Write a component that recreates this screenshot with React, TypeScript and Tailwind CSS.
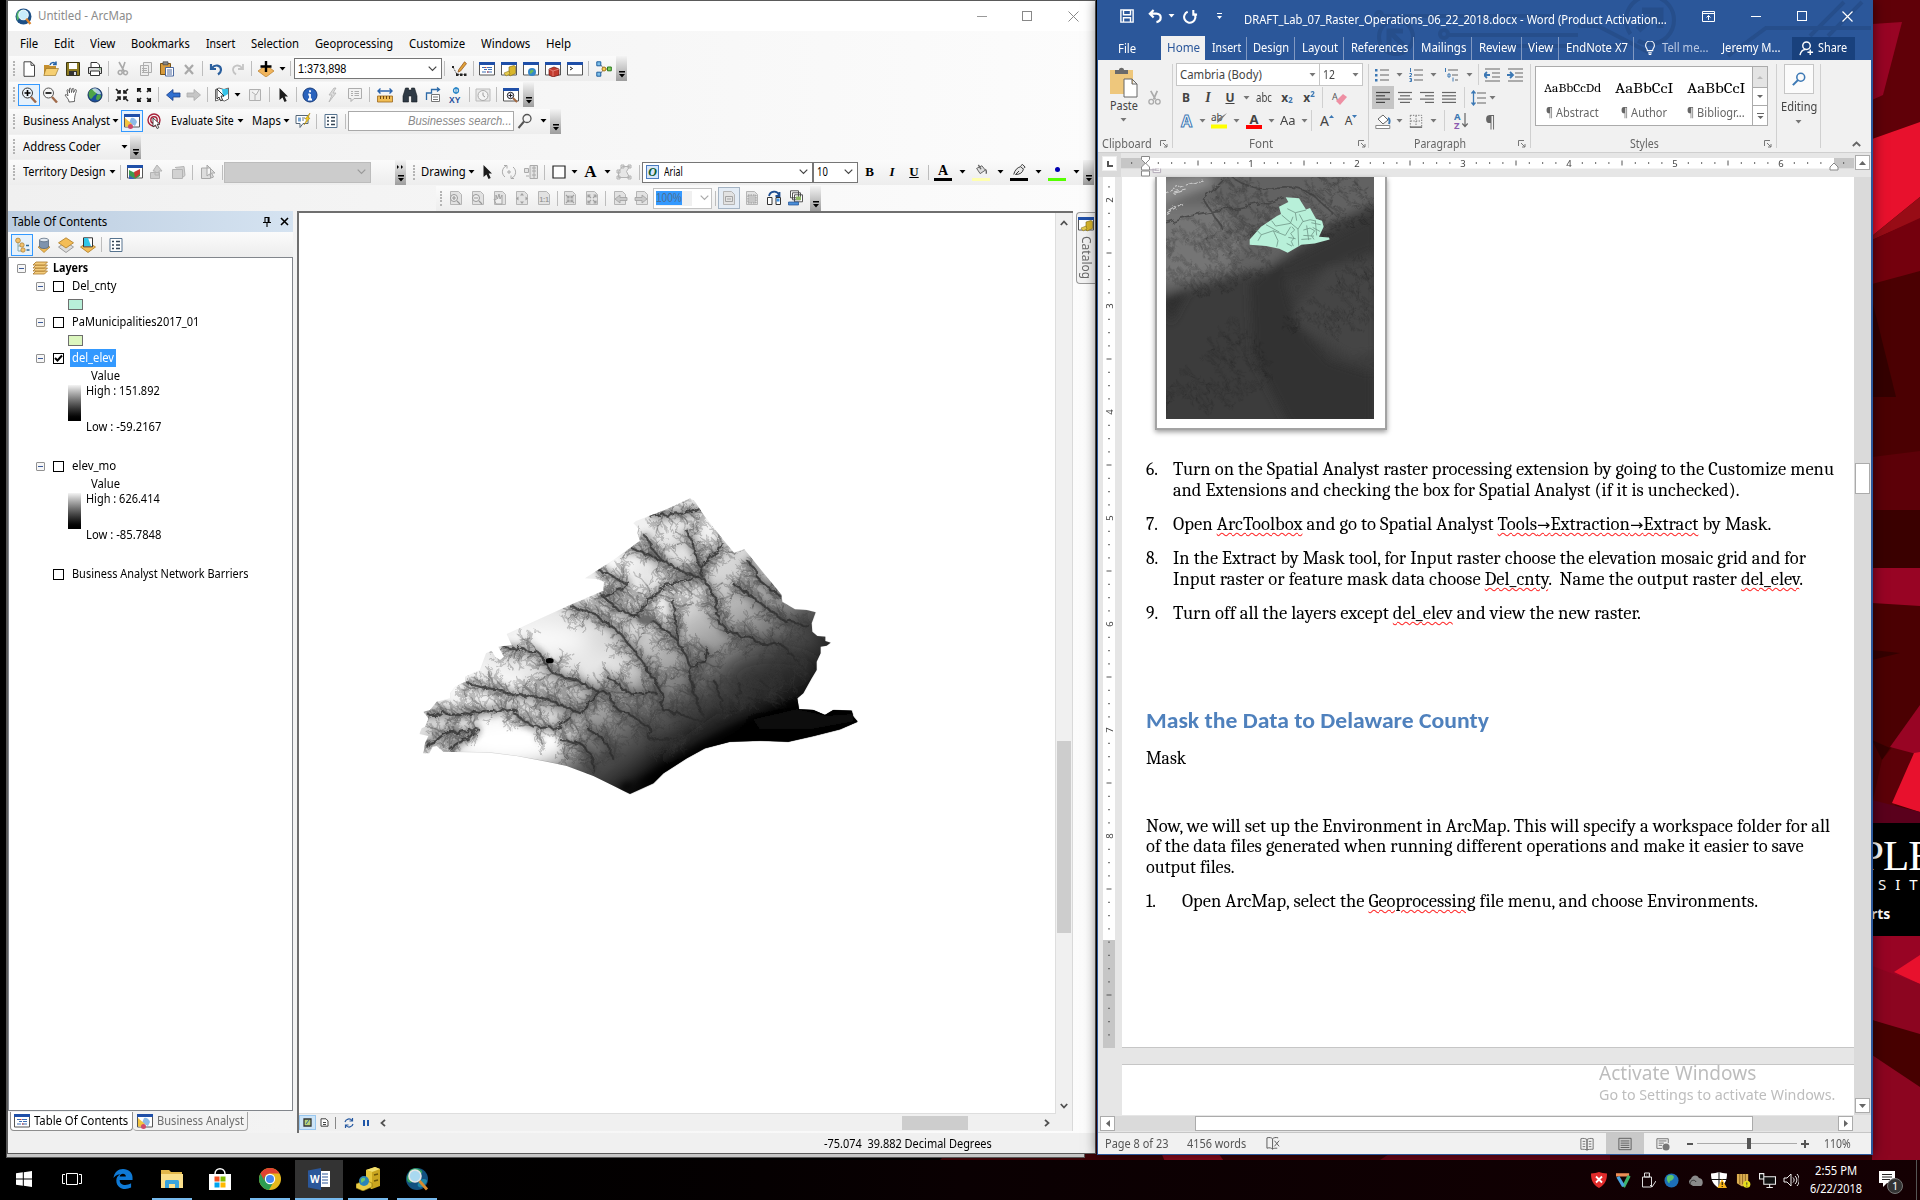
import React, { useLayoutEffect, useRef, useState } from "react";

type Kids = { children?: React.ReactNode };

/* Text squeezed or stretched to an exact width. */
function T({ w, c = "", children }: { w: number; c?: string } & Kids) {
  const ref = useRef<HTMLSpanElement>(null);
  const [s, setS] = useState(1);
  useLayoutEffect(() => {
    if (ref.current && ref.current.offsetWidth) setS(w / ref.current.offsetWidth);
  }, [w]);
  return (
    <span className={"inline-block shrink-0 whitespace-pre " + c} style={{ width: w }}>
      <span ref={ref} className="inline-block origin-left" style={{ transform: `scaleX(${s})` }}>
        {children}
      </span>
    </span>
  );
}

/* Toolbar cell */
function C({ c = "w-[22px]", children }: { c?: string } & Kids) {
  return <div className={"flex h-full shrink-0 items-center justify-center " + c}>{children}</div>;
}
const Sep = ({ c = "w-[5px]" }) => (
  <C c={c}>
    <div className="h-[15px] w-px bg-[#bdbdbd]" />
  </C>
);
const Arr = ({ c = "w-[9px]", f = "#000" }) => (
  <C c={c}>
    <svg width="7" height="4" viewBox="0 0 7 4">
      <path d="M0.5 0h6l-3 3.5z" fill={f} />
    </svg>
  </C>
);
const Handle = () => (
  <C c="w-[9px]">
    <div className="flex h-[15px] w-[2px] flex-col justify-between pl-0">
      {[0, 1, 2, 3, 4].map((i) => (
        <div key={i} className="h-[2px] w-[2px] bg-[#b4b4b4]" />
      ))}
    </div>
  </C>
);
const Over = ({ top = false }) => (
  <div className="flex h-[25px] w-[11px] shrink-0 flex-col items-center justify-between bg-linear-to-b from-[#f4f4f4] to-[#9d9d9d] pb-[3px] pt-[5px]">
    <svg width="7" height="5" viewBox="0 0 7 5">
      {top && <path d="M0 0l2 2-2 2zM4 0l2 2-2 2z" fill="#000" />}
    </svg>
    <svg width="7" height="7" viewBox="0 0 7 7">
      <path d="M1 0h6v1.5H1zM1 3h6L4 6.5z" fill="#000" />
    </svg>
  </div>
);
const Chev = ({ f = "#444" }) => (
  <svg width="9" height="6" viewBox="0 0 9 6">
    <path d="M.7.7l3.8 3.8L8.3.7" fill="none" stroke={f} strokeWidth="1.2" />
  </svg>
);

function I({ s = 16, children, vb = "0 0 16 16" }: { s?: number; vb?: string } & Kids) {
  return (
    <svg width={s} height={s} viewBox={vb} className="shrink-0" fill="none">
      {children}
    </svg>
  );
}

const pageShape = <path d="M2.5 1.5h8l3 3v10h-11z" fill="#e2e2e2" stroke="#b5b5b5" />;
const win = (
  <>
    <path d="M.5 2.500h15v11.500H.5z" fill="#fff" stroke="#555" />
    <path d="M0 1h16v3H0z" fill="#1f4fa8" />
  </>
);
const globe = (
  <>
    <circle cx="8" cy="8" r="7" fill="#1b4f9c" stroke="#16345e" />
    <path d="M2 5c2-4 6-3 7-2s1 4-1 5-3 4-4 4-3-4-2-7zM10 8c3-1 4 0 4 1s-2 5-4 4 0-4 0-5z" fill="#4fa548" />
    <path d="M5 2c4-2 8 1 9 5-3 1-6-1-9-5z" fill="#e2f3ff" opacity=".75" />
  </>
);

const icons: Record<string, React.ReactNode> = {
  new: <path d="M3 .8h7l3.500 3.500v11H3zM10 .8v3.500h3.500" fill="#fff" stroke="#444" />,
  open: (
    <>
      <path d="M1 4h5l1 1h6v9H1z" fill="#c58f2e" />
      <path d="M3 7.500h12.500l-3 7H.8z" fill="#f6cf72" stroke="#8f6a1f" strokeWidth=".6" />
      <path d="M7 4c1-3 4-3 6-1M13 .5v3h-3" stroke="#2563a8" strokeWidth="1.500" />
    </>
  ),
  save: (
    <>
      <path d="M1.500 1.500h13v13h-13z" fill="#8d7b22" stroke="#3c3610" />
      <path d="M4 2h8v6H4z" fill="#fff" />
      <path d="M4 10h8v4.500H4z" fill="#333" />
      <path d="M9 11h2v3H9z" fill="#ddd" />
    </>
  ),
  print: (
    <>
      <path d="M4 6V1.500h6L12.500 4v2" fill="#fff" stroke="#333" />
      <path d="M1.500 6.500h13v6h-13z" fill="#ddd" stroke="#333" />
      <path d="M3.500 10h9v4.500h-9z" fill="#fff" stroke="#333" />
      <path d="M12 8h1.500" stroke="#3a3" />
    </>
  ),
  cut: <path d="M4 1l5 9M10 1L7 10M6.500 10a2 2 0 1 0-1 3.500 2 2 0 0 0 1-3.500zM9.500 10a2 2 0 1 0 3 2 2 2 0 0 0-3-2z" stroke="#aaa" strokeWidth="1.600" />,
  copy: <path d="M5.500 1.500h8v10h-8zM2.500 4.500h8v10h-8zM4 7.500h5M4 9.500h5M4 11.500h5" fill="#eee" stroke="#adadad" />,
  paste: (
    <>
      <path d="M1.500 2.500h10v11h-10z" fill="#d89b3c" stroke="#7c5515" />
      <path d="M4 .8h5v3H4z" fill="#888" stroke="#444" strokeWidth=".7" />
      <path d="M6.500 6.500h8v8.500h-8zM8 9h5M8 11h5M8 13h5" fill="#fff" stroke="#3a5a96" strokeWidth=".9" />
    </>
  ),
  del: <path d="M4 4l8 9M12 4l-8 9" stroke="#a9a9a9" strokeWidth="2.200" />,
  undo: <path d="M3 3v5h5M4 7c3-4 9-3 9 2 0 2-1 3-3 4.500" stroke="#2a5f9e" strokeWidth="2.200" />,
  redo: <path d="M13 3v5H8M12 7c-3-4-9-3-9 2 0 2 1 3 3 4.500" stroke="#c4c4c4" strokeWidth="1.800" />,
  add: (
    <>
      <path d="M8 4l8 6-8 6-8-6z" fill="#f0b45c" stroke="#b87b28" strokeWidth=".7" />
      <path d="M8 0v11M2.500 5.500h11" stroke="#000" strokeWidth="2.400" />
    </>
  ),
  edit: (
    <>
      <path d="M13.500.8l2 1.800-6 7.500-2.500 1 .8-2.500z" fill="#e0a238" stroke="#8d4b12" strokeWidth=".7" />
      <path d="M2 6l4 7.500h8" stroke="#222" strokeWidth=".8" strokeDasharray="2 1" />
      <path d="M1 5h2v2H1zM5 12.500h2.500V15H5zM9 12.500h2.500V15H9zM13 12.500h2.500V15H13z" fill="#222" />
    </>
  ),
  toc: (
    <>
      {win}
      <path d="M3 6.500h3M8 6.500h5M5 8.500h3M9 8.500h4M3 11h4M8 11h5" stroke="#3c6eb4" strokeWidth="1.200" />
      <path d="M6 6h1.500v1H6zM8 10.500h1.500v1H8z" fill="#c33" />
    </>
  ),
  catalog: (
    <>
      {win}
      <path d="M8 6l5-1.500 1.500 1v7L9 15l-1-1z" fill="#d9b62b" stroke="#7e6811" strokeWidth=".6" />
      <path d="M3 12l5-2 1 3-4 2z" fill="#e6cb4e" stroke="#7e6811" strokeWidth=".5" />
    </>
  ),
  search: (
    <>
      {win}
      <circle cx="9" cy="11" r="4" fill="#3587c9" />
      <path d="M7 10c2-3 5 0 3 1s-2 3-3 1z" fill="#69b95a" />
    </>
  ),
  toolbox: (
    <>
      {win}
      <path d="M4 8l5-2 5 2v6l-6 2-4-2z" fill="#c23b2e" stroke="#6e1812" strokeWidth=".7" />
      <path d="M4 8l4 2 6-2M8 10v5" stroke="#f09b90" strokeWidth=".7" />
    </>
  ),
  python: (
    <>
      {win}
      <path d="M3 6l2.500 1.500L3 9" stroke="#222" />
    </>
  ),
  model: (
    <>
      <path d="M4 3l4 5-4 5M8 8h5" stroke="#777" />
      <path d="M.8.8h4v4h-4zM.8 11.200h4v4h-4z" fill="#7fc0ea" stroke="#1f5f9e" />
      <circle cx="8" cy="8" r="2" fill="#f5cf52" stroke="#a5721a" />
      <path d="M11.500 6h3.800v3.800h-3.800z" fill="#84cf5c" stroke="#2c7a1d" />
    </>
  ),
  zin: (
    <>
      <circle cx="6.500" cy="6" r="5" fill="#eaf3fb" stroke="#333" />
      <path d="M6.500 3v6M3.500 6h6" stroke="#000" strokeWidth="1.600" />
      <path d="M10 10l5 5.500" stroke="#a06a4a" strokeWidth="2.400" />
    </>
  ),
  zout: (
    <>
      <circle cx="6.500" cy="6" r="5" fill="#f6f6f6" stroke="#555" />
      <path d="M3.500 6h6" stroke="#000" strokeWidth="1.600" />
      <path d="M10 10l5 5.500" stroke="#a06a4a" strokeWidth="2.400" />
    </>
  ),
  pan: <path d="M5 15c0-3-3-5-4-7 1-1 2 0 3 1L3 3c1-1 2 0 2.500 3V1.500c1-1 2 0 2 4l1-4c1-.5 2 0 1 4l2-3c1 0 1.500 1 0 4-1 4-1 5-1 8z" fill="#fff" stroke="#555" strokeWidth=".9" />,
  globe,
  fin: <path d="M2 2l4 4M6 3V6H3M14 2l-4 4M10 3V6h3M2 14l4-4M6 13V10H3M14 14l-4-4M10 13V10h3" stroke="#1c1c1c" strokeWidth="1.700" />,
  fout: <path d="M5 5L1.800 1.800M1.800 5V1.800H5M11 5l3.200-3.200M14.200 5V1.800H11M5 11l-3.200 3.200M1.800 11v3.200H5M11 11l3.200 3.200M14.200 11v3.200H11" stroke="#1c1c1c" strokeWidth="1.700" />,
  back: <path d="M8 2.500v3.500h7v4H8v3.500L1.500 8z" fill="#2f6fd0" stroke="#1d3f86" strokeWidth=".8" />,
  fwd: <path d="M8 2.500v3.500H1v4h7v3.500L14.500 8z" fill="#c6c6c6" stroke="#aaa" strokeWidth=".8" />,
  sel: (
    <>
      <path d="M1.500 2.500L5 1l5 1.500L14.500 1v11l-4 2-5-1.500-4 1.500z" fill="#fff" stroke="#666" />
      <path d="M8 2h6v5L9 10z" fill="#35c3e8" />
      <path d="M3 2l7 7H7l1.500 4-2 .7L5 10l-2 2z" fill="#fff" stroke="#222" strokeWidth=".9" />
    </>
  ),
  clr: <path d="M2.500 2.500h11v11h-11zM5 5l4 3 3-5M8 8v5" fill="#eee" stroke="#b0b0b0" />,
  ptr: <path d="M4.500 1v12l3-2.600 2 4.600 2.200-1-2-4.500H13z" fill="#1c1c1c" />,
  info: (
    <>
      <circle cx="8" cy="8" r="7" fill="#2a63bd" stroke="#173b7a" />
      <path d="M8 3.200v2M8 7v5.500M6.300 7.500H8M6 12.500h4" stroke="#fff" strokeWidth="1.800" />
    </>
  ),
  bolt: <path d="M10 1L5 8h3l-3 7 7-9H9l3-5z" fill="#ddd" stroke="#b2b2b2" strokeWidth=".8" />,
  html: <path d="M1.500 1.500h13v10H7l-3 3v-3H1.500zM4 4.500h2M7.500 4.500H12M4 6.500h2M7.500 6.500H12M4 8.500h2M7.500 8.500H12" fill="#f2f2f2" stroke="#adadad" />,
  meas: (
    <>
      <path d="M1 4h14M3.500 1.500L1 4l2.500 2.500M12.500 1.500L15 4l-2.500 2.500" stroke="#2b64ad" strokeWidth="1.400" />
      <path d="M.5 9h15v6H.5z" fill="#f0bd55" stroke="#9a661a" strokeWidth=".8" />
      <path d="M3.500 9v3M6.500 9v3M9.500 9v3M12.500 9v3" stroke="#6d4611" />
    </>
  ),
  bino: <path d="M3.500 1h3v2h3V1h3l2.500 8v6H9.500V9h-3v6H1V9z" fill="#2f3a45" stroke="#161c22" strokeWidth=".6" />,
  route: (
    <>
      <path d="M1.500 13V6h5V2.500h8M12 .5l2.500 2L12 4.500" stroke="#2c6aa8" strokeWidth="1.300" />
      <path d="M6.500 7.500h8v7h-8zM8 10h5M8 12.500h5" fill="#fff" stroke="#777" />
    </>
  ),
  xy: (
    <>
      <circle cx="8" cy="3.500" r="2.500" stroke="#2784c7" strokeWidth="1.300" />
      <path d="M8 0v7" stroke="#2784c7" />
      <text x="1" y="15.500" fontSize="8.500" fontWeight="700" fontFamily="Liberation Sans, sans-serif" fill="#1f4e9c">XY</text>
    </>
  ),
  time: (
    <>
      <path d="M1 2h14v12H1z" fill="#e9e9e9" stroke="#bbb" />
      <circle cx="8" cy="8.500" r="5" fill="#f4f4f4" stroke="#aaa" />
      <path d="M8 5.500v3l2 1.500" stroke="#999" />
    </>
  ),
  view: (
    <>
      {win}
      <circle cx="7.500" cy="8.500" r="3.200" fill="#eef" stroke="#222" />
      <path d="M7.500 6.500v4M5.500 8.500h4" stroke="#222" />
      <path d="M10 11l4 4" stroke="#a2673f" strokeWidth="2" />
    </>
  ),
  ba: (
    <>
      {win}
      <path d="M7 5a5 5 0 0 1 6 4l-2 4-6-3z" fill="#8dbbe6" />
      <path d="M1 5l7 6-5 3-2-1z" fill="#f3c440" />
      <circle cx="6.500" cy="13.500" r="2.500" fill="#cf4a6a" />
    </>
  ),
  target: (
    <>
      <circle cx="7" cy="7" r="6" stroke="#a8223a" strokeWidth="1.400" />
      <circle cx="7" cy="7" r="3.200" stroke="#a8223a" strokeWidth="1.400" />
      <path d="M6 5v9l2.500-2 1.500 3.500 1.800-.8-1.600-3.500H13z" fill="#fff" stroke="#222" strokeWidth=".8" />
    </>
  ),
  balloon: (
    <>
      <path d="M1 2.500h12v8H8l-3 4v-4H1z" fill="#fff" stroke="#567" />
      <path d="M3 4.500h3v4H3z" fill="#78a6d6" />
      <path d="M7 5h3M7 7h2" stroke="#678" />
      <path d="M15 0l-5 6h2l-3 6 6-7h-2z" fill="#f7cf1e" stroke="#a77f08" strokeWidth=".5" />
    </>
  ),
  list: (
    <>
      <path d="M2 1.500h12v13H2z" fill="#fff" stroke="#56738f" />
      <path d="M4 4.500h2M8 4.500h4M4 8h2M8 8h4M4 11.500h2M8 11.500h4" stroke="#345" strokeWidth="1.300" />
    </>
  ),
  mag: (
    <>
      <circle cx="10" cy="5.500" r="4" stroke="#555" strokeWidth="1.300" />
      <path d="M7 8.500L1.500 15" stroke="#555" strokeWidth="2" />
    </>
  ),
  terr: (
    <>
      {win}
      <path d="M2 6l6 3 5-3v6l-5 3-6-3z" fill="#3c9a4d" />
      <path d="M7 8l6-3v5l-5 4z" fill="#c63a33" />
      <path d="M2 11l6 4H2z" fill="#3c62b5" />
    </>
  ),
  up: <path d="M1.500 8.500h9v6h-9zM8 1l5 6h-3v4H6V7H4z" fill="#cfcfcf" stroke="#b4b4b4" />,
  fold: <path d="M1.500 5.500h10v9h-10zM4 3.500l9-1 1 9-2.500 2" fill="#d2d2d2" stroke="#b4b4b4" />,
  selg: <path d="M1.500 4h9v10.500h-9zM7 1v11l2.500-2 2 4 2-1-2-4H15z" fill="#ddd" stroke="#a8a8a8" />,
  rot: <path d="M4 13a6.500 6.500 0 0 1 1-11M12 3a6.500 6.500 0 0 1-1 11M3 1.500h3v3M13 14.500h-3v-3M7 7h2v2H7z" stroke="#a9a9a9" />,
  zsel: <path d="M1.500 4.500h4v4h-4zM7 1.500h7.500v13H7zM3 12h3M9 4h4M9 7h4M9 11h4M11 2v12" fill="#e3e3e3" stroke="#aaa" />,
  rect: <path d="M2 2h12v12H2z" fill="#fdfdfd" stroke="#222" strokeWidth="1.200" />,
  verts: <path d="M2.500 13.500v-6l4-5h7l-3 5 3 6zM1 12h3v3H1zM12 12h3v3h-3zM5 1h3v3H5zM12 1h3v3h-3zM1 6h3v3H1z" fill="#e6e6e6" stroke="#b3b3b3" />,
  bucket: (
    <>
      <path d="M3 5l6-3 4 5-6 4z" fill="#ddd" stroke="#555" />
      <path d="M5 1l3 5M13 6c2 2 1 4 1 5" stroke="#666" strokeWidth="1.600" />
    </>
  ),
  pen: <path d="M2 12c1-5 4-8 8-9l3 3c-1 4-4 6-9 6l4-4M10 2l2-1.500 3 3L13.500 5" fill="#e7e7e7" stroke="#222" />,
  pz: (
    <>
      {pageShape}
      <circle cx="6" cy="8" r="3.500" fill="#eee" stroke="#999" />
      <path d="M4 8h4M6 6v4M9 11l3 3" stroke="#999" strokeWidth="1.200" />
    </>
  ),
  pzo: (
    <>
      {pageShape}
      <circle cx="6" cy="8" r="3.500" fill="#eee" stroke="#999" />
      <path d="M4 8h4M9 11l3 3" stroke="#999" strokeWidth="1.200" />
    </>
  ),
  phand: (
    <>
      {pageShape}
      <path d="M4 14l-2-5 2 1V5l1.500 4L7 4l1 5 2-4v9z" fill="#eee" stroke="#a3a3a3" />
    </>
  ),
  pfull: (
    <>
      {pageShape}
      <path d="M8 3l2 2.500H6zM8 14l2-2.500H6zM2 8.500L4.500 6.500v4zM14 8.500l-2.500-2v4z" fill="#a0a0a0" />
    </>
  ),
  p11: (
    <>
      {pageShape}
      <text x="3.500" y="12" fontSize="6.500" fontWeight="700" fontFamily="Liberation Sans, sans-serif" fill="#999">1:1</text>
    </>
  ),
  pin4: (
    <>
      {pageShape}
      <path d="M4 5l3 3M7 5.500V8H4.500M12 5L9 8M9 5.500V8h2.500M4 13l3-3M7 12.500V10H4.500M12 13l-3-3M9 12.500V10h2.500" stroke="#a0a0a0" strokeWidth="1.200" />
    </>
  ),
  pout4: (
    <>
      {pageShape}
      <path d="M7 8L4 5M4 7.500V5h2.500M9 8l3-3M12 7.500V5H9.500M7 10l-3 3M4 10.500V13h2.500M9 10l3 3M12 10.500V13H9.500" stroke="#a0a0a0" strokeWidth="1.200" />
    </>
  ),
  pback: (
    <>
      {pageShape}
      <path d="M8 5v2.500h7v3H8V13L3 9z" fill="#c9c9c9" stroke="#a0a0a0" strokeWidth=".8" />
    </>
  ),
  pfwd: (
    <>
      {pageShape}
      <path d="M8 5v2.500H1v3h7V13l5-4z" fill="#c9c9c9" stroke="#a0a0a0" strokeWidth=".8" />
    </>
  ),
  pg1: (
    <>
      {pageShape}
      <path d="M4.500 6.500h7v5h-7zM6 9h4" stroke="#a3a3a3" />
    </>
  ),
  pg2: (
    <>
      {pageShape}
      <path d="M4 5h8v8H4z" fill="#c6c6c6" stroke="#999" strokeDasharray="1.500 1" />
    </>
  ),
  dd: (
    <>
      <path d="M1.500 7.500h4.500v7H1.500zM10 7.500h4.500v7H10z" fill="#fff" stroke="#333" />
      <path d="M10.500 8.500h3v3h-3z" fill="#3a8ee0" />
      <path d="M3 6c1-5 8-6 10-1M13.500 2v4H9.500" stroke="#1f4f92" strokeWidth="1.800" />
    </>
  ),
  book: (
    <>
      <path d="M2.500.8h8v7h-8zM4.500 2.800h8v7h-8zM6.500 4.800h8v7h-8z" fill="#fff" stroke="#444" strokeWidth=".9" />
      <path d="M8 6.500h5v3.500H8z" fill="#8fb963" />
      <path d="M.5 12h10v3H.5z" fill="#4c8fd8" stroke="#1f4f92" strokeWidth=".7" />
    </>
  ),
  t1: (
    <>
      <path d="M4 5v9h5M4 9h5" stroke="#8aa" strokeWidth="1" />
      <circle cx="4" cy="3.500" r="2.400" fill="#f1c16e" stroke="#a87a2c" strokeWidth=".7" />
      <circle cx="8" cy="8" r="2.200" fill="#f1c16e" stroke="#a87a2c" strokeWidth=".7" />
      <circle cx="9" cy="13" r="2.200" fill="#f1c16e" stroke="#a87a2c" strokeWidth=".7" />
      <path d="M12 8.500h3M12.500 13h3" stroke="#2e6a9a" strokeWidth="1.500" />
    </>
  ),
  t2: (
    <>
      <path d="M2 10l6 5.500 6-5.500-6-2z" fill="#f0b954" stroke="#b17e24" strokeWidth=".7" />
      <path d="M3.500 3v7c1 2 8 2 9 0V3z" fill="#7e93ad" stroke="#4e6076" strokeWidth=".7" />
      <ellipse cx="8" cy="3" rx="4.500" ry="1.800" fill="#dfe7f0" stroke="#4e6076" strokeWidth=".7" />
    </>
  ),
  t3: (
    <>
      <path d="M8 5l7.500 5L8 15.500.5 10z" fill="#ddd" stroke="#888" strokeWidth=".8" />
      <path d="M8 .8l7.500 5L8 11 .5 5.800z" fill="#f3bd58" stroke="#ad7a21" strokeWidth=".8" />
    </>
  ),
  t4: (
    <>
      <path d="M8 5l7.500 5L8 15.500.5 10z" fill="#f3bd58" stroke="#ad7a21" strokeWidth=".8" />
      <path d="M3.500.8h9v9h-9z" fill="#fff" stroke="#333" />
      <path d="M4 1h4l3 8H4z" fill="#2fc6ea" />
    </>
  ),
  layers: (
    <>
      {[11, 8, 5, 2].map((y) => (
        <path key={y} d={`M4 ${y}h11.500l-3 3H1z`} fill="#f5cd7d" stroke="#a8762a" strokeWidth=".8" />
      ))}
    </>
  ),
};
const G = ({ n, s = 16 }: { n: string; s?: number }) => <I s={s}>{icons[n]}</I>;
const K = ({ n, c }: { n: string; c?: string }) => (
  <C c={c}>
    <G n={n} />
  </C>
);

/* ---------- terrain raster ---------- */
type P = [number, number];
const streams: P[][] = [
  [[690, 200], [790, 245], [850, 275], [910, 295], [945, 350], [955, 420], [980, 455], [1060, 475], [1085, 492], [1140, 492], [1180, 530], [1225, 580]],
  [[970, 190], [930, 235], [900, 265]],
  [[900, 88], [830, 100], [750, 110]],
  [[860, 150], [880, 200], [905, 290]],
  [[730, 165], [760, 210], [800, 250]],
  [[600, 340], [650, 385], [720, 415], [770, 430], [830, 480], [860, 530], [880, 620], [890, 670], [910, 715]],
  [[820, 360], [825, 420], [835, 480]],
  [[510, 380], [580, 400], [660, 460], [700, 510], [750, 580], [780, 630], [790, 690], [850, 705], [910, 725]],
  [[310, 500], [410, 515], [460, 580], [520, 600], [600, 635], [630, 640], [640, 680], [700, 710], [750, 745], [745, 775], [800, 778], [860, 770]],
  [[200, 610], [330, 640], [430, 655], [540, 700], [580, 660], [600, 635]],
  [[80, 700], [180, 705], [270, 690], [350, 690]],
  [[340, 700], [400, 740], [470, 745], [510, 710]],
  [[480, 780], [540, 790], [575, 830], [580, 880]],
  [[560, 740], [620, 790], [640, 840]],
  [[80, 800], [140, 760], [240, 750]],
  [[150, 810], [190, 780], [230, 760]],
  [[690, 310], [640, 340], [610, 350]],
  [[590, 270], [640, 290], [680, 310]],
  [[1000, 310], [1080, 370], [1150, 420], [1230, 440]],
  [[1040, 240], [1090, 310], [1145, 355]],
  [[940, 600], [960, 650], [970, 715]],
  [[1080, 600], [1110, 630], [1090, 660]],
  [[1020, 610], [1015, 690]],
  [[920, 500], [915, 545], [870, 560]],
  [[620, 590], [690, 640], [770, 640]],
  [[880, 290], [790, 320], [710, 400]],
];
function buildTerrain() {
  let seed = 77;
  const rnd = () => ((seed = (seed * 1103515245 + 12345) % 2147483648) / 2147483648);
  let main = "";
  let mid = "";
  let fine = "";
  const branch = (x: number, y: number, a: number, len: number, depth: number) => {
    let d = `M${x.toFixed(0)} ${y.toFixed(0)}`;
    const n = Math.max(2, Math.round(len / 7));
    for (let i = 0; i < n; i++) {
      a += (rnd() - 0.5) * 0.8;
      x += Math.cos(a) * 7;
      y += Math.sin(a) * 7;
      d += `L${x.toFixed(0)} ${y.toFixed(0)}`;
      if (depth > 0 && rnd() < 0.6) branch(x, y, a + (rnd() < 0.5 ? -1 : 1) * (0.5 + rnd() * 0.5), len * (0.3 + rnd() * 0.3), depth - 1);
    }
    if (depth > 1) mid += d;
    else fine += d;
  };
  streams.forEach((s) => {
    main += `M${s[0].join(" ")}`;
    for (let i = 1; i < s.length; i++) {
      const [x0, y0] = s[i - 1];
      const [x1, y1] = s[i];
      const L = Math.hypot(x1 - x0, y1 - y0);
      const a = Math.atan2(y1 - y0, x1 - x0);
      const n = Math.max(1, Math.round(L / 10));
      for (let k = 1; k <= n; k++) {
        const t = k / n;
        const j = k === n ? 0 : (rnd() - 0.5) * 9;
        const x = x0 + (x1 - x0) * t - Math.sin(a) * j;
        const y = y0 + (y1 - y0) * t + Math.cos(a) * j;
        main += `L${x.toFixed(0)} ${y.toFixed(0)}`;
        const side = rnd() < 0.5 ? -1 : 1;
        branch(x, y, a + Math.PI - side * (0.7 + rnd() * 0.5), 14 + rnd() * 50, 2);
      }
    }
  });
  return { main, mid, fine };
}
const terrain = buildTerrain();
const outline =
  "M870 55L883 62 900 88 915 110 972 182 1002 218 1033 208 1145 345 1147 365 1185 388 1220 390 1247 397 1235 430 1237 455 1252 468 1276 470 1276 483 1292 488 1280 497 1262 500 1262 520 1250 545 1250 570 1235 595 1210 640 1192 655 1197 688 1240 690 1275 705 1300 690 1355 692 1360 710 1373 725 1320 748 1240 768 1165 785 1080 782 990 785 915 805 860 835 790 880 760 910 690 942 580 888 500 858 440 845 350 828 270 818 130 815 110 798 98 800 88 820 70 820 75 790 85 768 58 762 65 745 75 740 85 715 70 695 90 690 110 665 150 655 150 640 165 620 195 605 195 590 240 570 258 520 275 512 285 530 300 540 312 530 295 500 335 495 320 462 400 425 510 375 610 332 612 305 590 297 555 295 640 240 720 182 712 160 715 145 700 130 708 123 800 88z";
const Terrain = () => (
  <svg width="480" height="330" viewBox="0 0 1440 990">
    <defs>
      <clipPath id="cty">
        <path d={outline} />
      </clipPath>
      <linearGradient id="base" gradientUnits="userSpaceOnUse" x1="470" y1="300" x2="840" y2="880">
        <stop offset="0" stopColor="#f0f0f0" />
        <stop offset=".4" stopColor="#d2d2d2" />
        <stop offset=".6" stopColor="#9c9c9c" />
        <stop offset=".76" stopColor="#565656" />
        <stop offset=".9" stopColor="#2a2a2a" />
        <stop offset="1" stopColor="#050505" />
      </linearGradient>
      <filter id="b2t" x="-20%" y="-20%" width="140%" height="140%"><feGaussianBlur stdDeviation="2" /></filter>
      <filter id="b3" x="-20%" y="-20%" width="140%" height="140%"><feGaussianBlur stdDeviation="3" /></filter>
      <filter id="b9" x="-20%" y="-20%" width="140%" height="140%"><feGaussianBlur stdDeviation="9" /></filter>
      <filter id="b40" x="-60%" y="-60%" width="220%" height="220%"><feGaussianBlur stdDeviation="30" /></filter>
      <filter id="rough" x="-5%" y="-5%" width="110%" height="110%">
        <feTurbulence type="fractalNoise" baseFrequency=".05" numOctaves="3" seed="4" />
        <feDisplacementMap in="SourceGraphic" scale="14" />
      </filter>
    </defs>
    <g clipPath="url(#cty)">
      <rect width="1440" height="990" fill="url(#base)" />
      <g filter="url(#b40)">
        <ellipse cx="340" cy="780" rx="190" ry="80" fill="#fff" />
        <ellipse cx="250" cy="620" rx="160" ry="70" fill="#fff" opacity=".8" />
        <ellipse cx="790" cy="350" rx="80" ry="45" fill="#fff" />
        <ellipse cx="440" cy="480" rx="130" ry="50" fill="#fff" opacity=".8" />
        <ellipse cx="640" cy="250" rx="80" ry="40" fill="#fff" opacity=".8" />
        <ellipse cx="610" cy="560" rx="110" ry="50" fill="#fff" opacity=".5" />
        <ellipse cx="950" cy="140" rx="60" ry="50" fill="#fff" opacity=".7" />
        <path d="M1150 350l210 90-80 250-330 10-230 160 500-20 250-150z" fill="#111" opacity=".5" />
        <ellipse cx="1120" cy="590" rx="150" ry="70" fill="#2a2a2a" opacity=".5" />
        <path d="M640 960l130-90 140-60 130-70 150-60 200-10v300z" fill="#000" />
      </g>
      <g stroke="#383838" strokeLinejoin="round" fill="none">
        <path d={terrain.mid} strokeWidth="16" opacity=".17" filter="url(#b9)" />
        <path d={terrain.main} strokeWidth="24" opacity=".4" filter="url(#b9)" />
        <g filter="url(#rough)">
          <path d={terrain.fine} strokeWidth="3.500" opacity=".27" filter="url(#b2t)" />
          <path d={terrain.mid} strokeWidth="4.500" opacity=".34" filter="url(#b2t)" />
          <path d={terrain.main} strokeWidth="6.500" opacity=".72" filter="url(#b2t)" stroke="#2c2c2c" />
        </g>
      </g>
      <ellipse cx="735" cy="420" rx="24" ry="11" fill="#6a6a6a" filter="url(#b3)" />
      <path d="M665 940L780 862 900 790 1010 732 1130 682 1195 655 1380 690v220H665z" fill="#000" opacity=".85" filter="url(#b9)" />
      <path d="M1060 718l130-30 90 20 80-6 0 22-130 24-150 0z" fill="#0e0e0e" filter="url(#b3)" />
      <ellipse cx="449" cy="542" rx="12" ry="8" fill="#000" />
    </g>
  </svg>
);

const Inset = () => (
  <svg width="208" height="242" viewBox="228 81 624 725" preserveAspectRatio="none" className="block">
    <defs>
      <filter id="b12" x="-30%" y="-30%" width="160%" height="160%"><feGaussianBlur stdDeviation="14" /></filter>
      <filter id="b2"><feGaussianBlur stdDeviation="1.500" /></filter>
      <filter id="wob" x="-5%" y="-5%" width="110%" height="110%">
        <feTurbulence type="fractalNoise" baseFrequency=".03" numOctaves="3" seed="9" />
        <feDisplacementMap in="SourceGraphic" scale="26" />
        <feGaussianBlur stdDeviation="1.600" />
      </filter>
      <clipPath id="ic"><path d="M228 81h624v725H228z" /></clipPath>
    </defs>
    <g clipPath="url(#ic)">
      <path d="M228 81h624v725H228z" fill="#3c3c3c" />
      <g filter="url(#b12)">
        <path d="M200 60h680v90l-160 70-180 130-160 40-180 50z" fill="#626262" />
        <path d="M200 170l180-10 90 110-60 90-210 40z" fill="#747474" />
        <path d="M200 90l140-20 40 30-180 70z" fill="#8a8a8a" />
        <path d="M860 190l-320 170 60 30 260-90z" fill="#363636" />
        <path d="M620 470l90-120 150-30v290l-80 10-100-60-70-40z" fill="#454545" />
        <path d="M480 400l90-70 50 190 100 110 130 40v160H600l-110-210z" fill="#303030" />
        <path d="M220 440l80-30-60 110z" fill="#2e2e2e" />
      </g>
      <g stroke="#262626" fill="none" filter="url(#wob)">
        <g transform="translate(190 20) scale(.3 .36)"><path d={terrain.mid} strokeWidth="6" opacity=".3" /></g>
        <g transform="translate(150 150) scale(.32 .34)"><path d={terrain.mid} strokeWidth="6" opacity=".35" /></g>
        <g transform="translate(440 20) scale(.34 .3)"><path d={terrain.mid} strokeWidth="6" opacity=".3" /></g>
        <g transform="translate(180 480) scale(.3 .36)"><path d={terrain.mid} strokeWidth="6" opacity=".18" /></g>
        <g transform="translate(560 300) scale(.3 .3)"><path d={terrain.mid} strokeWidth="6" opacity=".2" /></g>
      </g>
      <path d="M228 218q90-30 180-40t170-38M430 85q60 40 130 30 90-10 130 40l40 35M400 90l-60 60 60 90" stroke="#3c3c3c" strokeWidth="5" opacity=".7" fill="none" filter="url(#wob)" />
      <path d="M228 128l50-20 60-18M228 190l50-30M290 120l-40 10" stroke="#dadada" strokeWidth="3.500" opacity=".8" fill="none" filter="url(#wob)" />
      <path
        d="M627 145l21 33 12-4 18 32 18 6 5 18-14 30 30 2 2 6-45 12-40 4-41 24-25-12-40-8-49-4 0-16 20-22 14-16 48-32 12-6-6-22 28-14-8-14z"
        fill="#b8f0d9"
      />
      <path
        d="M592 176l24 12 32-8M575 195l26 22M616 188l4 24M528 224l40 22M545 212l12 16 44-8 8-20M500 240l14 14-10 18M514 254l36-12 14 30M550 242l36 14 16-26M564 272l-4 18M600 217l24 20 2 50M624 237l14-22 22-6 18 4M640 215l-12-22M606 230l8 10-12 10 10 14-8 10 6 14M595 262l22 4M590 280l16 8M640 240l20-6 14 8-10 14 8 12M650 226l6 44M664 218l28 6M668 232l22 12M676 212l4 44M640 256l32 2M634 268l30-2"
        fill="none"
        stroke="#6f9687"
        strokeWidth="2.400"
      />
    </g>
  </svg>
);

/* ---------- ArcMap ---------- */
const exp = (
  <span className="flex h-[9px] w-[9px] shrink-0 items-center justify-center rounded-[1px] border border-[#919191] bg-[#f6f6f6]">
    <span className="h-px w-[5px] bg-[#3b5a9a]" />
  </span>
);
function TreeRow({ label, w, on = false, noExp = false }: { label: string; w: number; on?: boolean; noExp?: boolean }) {
  return (
    <div className="flex h-[18px] items-center pl-[27px]">
      <span className="flex w-[17px] pt-px">{!noExp && exp}</span>
      <span className="mr-[6px] flex h-[11px] w-[11px] shrink-0 items-center justify-center border border-black">
        {on && (
          <svg width="9" height="9" viewBox="0 0 9 9">
            <path d="M1 4l2.500 2.500L8 1.500" fill="none" stroke="#000" strokeWidth="2" />
          </svg>
        )}
      </span>
      <span className={"flex h-[18px] items-center px-[2px] " + (on ? "bg-[#3399ff] text-white" : "")}>
        <T w={w}>{label}</T>
      </span>
    </div>
  );
}
const Swatch = ({ c }: { c: string }) => (
  <div className="flex h-[18px] items-center pl-[59px]">
    <div className={"h-[11px] w-[15px] border border-[#6e6e6e] " + c} />
  </div>
);
const Ramp = ({ hi, lo, wl }: { hi: string; lo: string; wl: number }) => (
  <>
    <div className="flex h-[18px] items-center pl-[82px]"><T w={29}>Value</T></div>
    <div className="flex h-[72px] pl-[59px]">
      <div className="mr-[5px] h-[36px] w-[13px] bg-linear-to-b from-[#f4f4f4] to-black" />
      <div className="-mt-[3px] flex h-[54px] flex-col justify-between leading-[18px]">
        <T w={74}>{hi}</T>
        <T w={wl}>{lo}</T>
      </div>
    </div>
  </>
);

const Grad = "bg-linear-to-b from-[#fbfbfb] to-[#ededed]";

function ArcMap() {
  const menus: [string, number][] = [["File", 18], ["Edit", 20], ["View", 25], ["Bookmarks", 59], ["Insert", 29], ["Selection", 48], ["Geoprocessing", 78], ["Customize", 56], ["Windows", 49], ["Help", 25]];
  return (
    <div className="absolute left-[7px] top-0 flex h-[1154px] w-[1089px] flex-col border border-[#5a5a5a] bg-linear-to-r from-[#f0f0f0] to-[#fcfcfc] font-['Noto_Sans','Open_Sans',sans-serif] text-[12px] text-black">
      <div className="flex h-[30px] shrink-0 items-center bg-white pl-[7px]">
        <I s={17}>
          <circle cx="8" cy="8" r="7.500" fill="#1c4f86" />
          <path d="M3 3c4-2 8 0 6 3s-5 2-6 5-3-5 0-8z" fill="#4fb56a" />
          <circle cx="8" cy="6.500" r="4.500" fill="#c9ecfa" stroke="#e8f6fb" />
          <path d="M10.500 10l4 5" stroke="#d9822b" strokeWidth="2.200" />
        </I>
        <T w={94} c="ml-[6px] text-[#8b8b8b]">Untitled - ArcMap</T>
        <div className="ml-auto flex items-center pr-[16px]">
          <span className="mr-[35px] h-px w-[10px] bg-[#999]" />
          <span className="mr-[36px] h-[10px] w-[10px] border border-[#888]" />
          <I s={11} vb="0 0 11 11"><path d="M.5.5l10 10M10.500.5l-10 10" stroke="#888" /></I>
        </div>
      </div>
      <div className="flex h-[25px] shrink-0 items-center gap-[16px] pl-[12px]">
        {menus.map(([m, w]) => <T key={m} w={w}>{m}</T>)}
      </div>
      {/* Standard */}
      <div className="flex h-[25px] shrink-0 items-center pl-[1px]">
        <div className={"flex h-[25px] items-center " + Grad}>
          <Handle />
          {["new", "open", "save", "print"].map((n) => <K key={n} n={n} />)}
          <Sep />
          <K n="cut" c="w-[23px]" /><K n="copy" c="w-[23px]" /><K n="paste" c="w-[20px]" /><K n="del" c="w-[23px]" />
          <Sep c="w-[4px]" />
          <K n="undo" c="w-[23px]" /><K n="redo" />
          <Sep /><K n="add" c="w-[24px]" /><Arr /><Sep c="w-[7px]" />
          <div className="flex h-[21px] w-[148px] items-center justify-between border border-[#767676] bg-white pl-[3px] pr-[4px]">
            <T w={48} c="font-['Liberation_Sans',sans-serif]">1:373,898</T><Chev />
          </div>
          <Sep /><K n="edit" c="w-[23px]" /><Sep c="w-[6px]" />
          {["toc", "catalog", "search", "toolbox", "python"].map((n) => <K key={n} n={n} />)}
          <Sep /><K n="model" c="w-[25px]" />
          <Over />
        </div>
      </div>
      {/* Tools */}
      <div className="flex h-[27px] shrink-0 items-center pl-[1px]">
        <div className={"flex h-[25px] items-center " + Grad}>
          <Handle />
          <div className="flex h-[22px] w-[22px] items-center justify-center border border-[#3399ff] bg-[#e6f1fb]"><G n="zin" /></div>
          <K n="zout" c="w-[20px]" /><K n="pan" c="w-[23px]" /><K n="globe" c="w-[23px]" /><Sep c="w-[4px]" />
          <K n="fin" c="w-[23px]" /><K n="fout" /><Sep c="w-[6px]" />
          <K n="back" c="w-[23px]" /><K n="fwd" c="w-[20px]" /><Sep c="w-[6px]" />
          <K n="sel" c="w-[23px]" /><Arr /><K n="clr" c="w-[25px]" /><Sep c="w-[4px]" />
          <K n="ptr" c="w-[23px]" /><Sep />
          <K n="info" /><K n="bolt" /><K n="html" c="w-[23px]" /><Sep c="w-[6px]" />
          <K n="meas" c="w-[25px]" /><K n="bino" c="w-[25px]" /><K n="route" /><K n="xy" c="w-[23px]" /><Sep />
          <K n="time" /><Sep /><K n="view" c="w-[24px]" />
          <Over />
        </div>
      </div>
      {/* Business Analyst */}
      <div className="flex h-[26px] shrink-0 items-center pl-[1px]">
        <div className={"flex h-[25px] items-center " + Grad}>
          <Handle />
          <T w={87} c="ml-[5px]">Business Analyst</T><Arr c="w-[11px]" />
          <div className="flex h-[22px] w-[22px] items-center justify-center border border-[#3399ff] bg-[#e6f1fb]"><G n="ba" /></div>
          <K n="target" c="w-[23px]" />
          <T w={63} c="ml-[5px]">Evaluate Site</T><Arr c="w-[13px]" />
          <T w={29} c="ml-[5px]">Maps</T><Arr c="w-[10px]" />
          <K n="balloon" c="w-[23px]" /><Sep /><K n="list" c="w-[24px]" /><Sep />
          <div className="flex h-[20px] w-[166px] items-center justify-end border border-[#a9a9a9] bg-white pr-px">
            <T w={104} c="font-['Liberation_Sans',sans-serif] italic text-[#8a8a8a]">Businesses search...</T>
          </div>
          <K n="mag" /><Arr c="w-[14px]" />
          <Over />
        </div>
      </div>
      <div className="flex h-[25px] shrink-0 items-center pl-[1px]">
        <div className={"flex h-[24px] items-center " + Grad}>
          <Handle /><T w={77} c="ml-[5px]">Address Coder</T><C c="w-[18px]" /><Arr c="w-[12px]" /><Over />
        </div>
      </div>
      {/* Territory + Drawing */}
      <div className="flex h-[26px] shrink-0 items-center pl-[1px]">
        <div className={"flex h-[25px] items-center " + Grad}>
          <Handle />
          <T w={83} c="ml-[5px]">Territory Design</T><Arr c="w-[12px]" /><Sep />
          <K n="terr" c="w-[23px]" /><K n="up" c="w-[21px]" /><K n="fold" c="w-[23px]" /><Sep /><K n="selg" c="w-[25px]" /><Sep c="w-[4px]" />
          <div className="flex h-[21px] w-[147px] items-center justify-end border border-[#bcbcbc] bg-[#cccccc] pr-[4px]"><Chev f="#999" /></div>
          <C c="w-[24px]" /><Over top />
          <C c="w-[3px]" /><Handle />
          <T w={45} c="ml-[3px]">Drawing</T><Arr c="w-[10px]" />
          <K n="ptr" c="w-[21px]" /><K n="rot" c="w-[23px]" /><K n="zsel" /><Sep />
          <K n="rect" c="w-[23px]" /><Arr c="w-[8px]" />
          <C c="w-[25px]"><span className="font-['Liberation_Serif',serif] text-[17px] font-bold">A</span></C><Arr c="w-[8px]" />
          <K n="verts" c="w-[25px]" /><Sep c="w-[6px]" />
          <div className="flex h-[21px] w-[171px] items-center border border-[#767676] bg-white pl-[3px] pr-[4px]">
            <span className="mr-[5px] flex h-[14px] w-[13px] items-center justify-center border border-[#4b7cc0] bg-[#d6e6fa] font-['Liberation_Serif',serif] text-[12px] font-bold italic text-[#0a5a2a]">O</span>
            <T w={19}>Arial</T><span className="ml-auto flex"><Chev /></span>
          </div>
          <div className="flex h-[21px] w-[45px] items-center justify-between border border-[#767676] bg-white pl-[3px] pr-[4px]"><T w={11}>10</T><Chev /></div>
          <div className="flex items-center font-['Liberation_Serif',serif] text-[13px]">
            <C c="w-[23px] font-bold">B</C><C c="w-[22px] font-bold italic">I</C><C c="w-[22px] font-bold underline">U</C>
          </div>
          <Sep c="w-[6px]" />
          <div className="flex w-[24px] flex-col items-center font-['Liberation_Serif',serif] text-[14px] font-bold leading-[14px]">A<span className="h-[3px] w-[18px] bg-black" /></div>
          <Arr c="w-[14px]" />
          <div className="flex w-[24px] flex-col items-center"><G n="bucket" s={14} /><span className="h-[3px] w-[18px] bg-[#ffffb0]" /></div>
          <Arr c="w-[14px]" />
          <div className="flex w-[24px] flex-col items-center"><G n="pen" s={14} /><span className="h-[3px] w-[18px] bg-black" /></div>
          <Arr c="w-[14px]" />
          <div className="flex h-[17px] w-[24px] flex-col items-center justify-between pt-[3px]"><span className="h-[5px] w-[5px] rounded-full bg-[#0000b0]" /><span className="h-[3px] w-[18px] bg-[#55ff00]" /></div>
          <Arr c="w-[14px]" />
          <Over />
        </div>
      </div>
      {/* Layout */}
      <div className="flex h-[26px] shrink-0 items-center pl-[428px]">
        <div className={"flex h-[25px] items-center " + Grad}>
          <Handle />
          {["pz", "pzo", "phand", "pfull", "p11"].map((n) => <K key={n} n={n} />)}
          <Sep c="w-[4px]" /><K n="pin4" /><K n="pout4" c="w-[21px]" /><Sep c="w-[6px]" />
          <K n="pback" c="w-[23px]" /><K n="pfwd" c="w-[21px]" /><C c="w-[1px]" />
          <div className="flex h-[21px] w-[59px] items-center justify-between border border-[#c3c3c3] bg-white px-[2px]">
            <span className="flex h-[15px] w-[36px] bg-[#f0f0f0]"><span className="flex h-[14px] items-center bg-[#3399ff] font-['Liberation_Sans',sans-serif] text-[#4d6f92]"><T w={26}>100%</T></span></span>
            <Chev f="#aaa" />
          </div>
          <Sep c="w-[6px]" />
          <div className="flex h-[22px] w-[22px] items-center justify-center border border-[#a5b4c4] bg-[#e4ecf5]"><G n="pg1" /></div>
          <K n="pg2" c="w-[23px]" /><K n="dd" c="w-[21px]" /><K n="book" c="w-[23px]" /><C c="w-[3px]" />
          <Over />
        </div>
      </div>
      <div className="flex h-[922px] shrink-0">
        {/* Table of contents */}
        <div className="flex w-[285px] flex-col">
          <div className="flex h-[21px] shrink-0 items-center bg-linear-to-r from-[#bccde0] to-[#d5e3f1] pl-[4px] pr-[4px]">
            <T w={95}>Table Of Contents</T>
            <span className="ml-auto mr-[8px] flex"><I s={10} vb="0 0 10 10"><path d="M3 .5h4v5H3zM1 5.500h8M5 5.500V10M6.200 1v4" stroke="#000" strokeWidth="1.100" /></I></span>
            <I s={9} vb="0 0 9 9"><path d="M1 1l7 7M8 1L1 8" stroke="#000" strokeWidth="1.600" /></I>
          </div>
          <div className={"flex h-[25px] shrink-0 items-center pl-[3px] " + Grad}>
            <div className="flex h-[22px] w-[22px] items-center justify-center border border-[#3399ff] bg-[#e6f1fb]"><G n="t1" /></div>
            <K n="t2" /><K n="t3" /><K n="t4" /><Sep /><K n="list" c="w-[24px]" />
          </div>
          <div className="flex h-[854px] shrink-0 flex-col border border-[#82868c] bg-white pt-px">
            <div className="flex h-[18px] items-center pl-[8px]">
              {exp}<span className="ml-[6px] mr-[5px] flex"><G n="layers" /></span><T w={35} c="font-bold">Layers</T>
            </div>
            <TreeRow label="Del_cnty" w={45} />
            <Swatch c="bg-[#b8f0d9]" />
            <TreeRow label="PaMunicipalities2017_01" w={127} />
            <Swatch c="bg-[#dbf6be]" />
            <TreeRow label="del_elev" w={42} on />
            <Ramp hi="High : 151.892" lo="Low : -59.2167" wl={75} />
            <TreeRow label="elev_mo" w={44} />
            <Ramp hi="High : 626.414" lo="Low : -85.7848" wl={75} />
            <TreeRow label="Business Analyst Network Barriers" w={177} noExp />
          </div>
          <div className="flex h-[20px] shrink-0 items-center pl-[2px]">
            <div className="flex h-[19px] w-[123px] items-center gap-[4px] rounded-b-[4px] border border-t-0 border-[#8d8d8d] bg-white pl-[3px]"><G n="toc" /><T w={94}>Table Of Contents</T></div>
            <div className="flex h-[19px] w-[115px] items-center gap-[4px] rounded-b-[4px] border border-l-0 border-t-0 border-[#a5a5a5] bg-[#f3f3f3] pl-[4px] text-[#6d6d6d]"><G n="ba" /><T w={87}>Business Analyst</T></div>
          </div>
        </div>
        {/* Map */}
        <div className="ml-[4px] flex w-[776px] flex-col border-l-2 border-t-2 border-[#6f6f6f]">
          <div className="flex h-[901px]">
            <div className="h-[901px] w-[757px] border-b border-r border-[#dedede] bg-white pl-[101px] pt-[267px]"><Terrain /></div>
            <div className="flex w-[17px] flex-col items-center border-r border-[#d9d9d9] bg-[#f0f0f0] pb-[5px] pt-[7px]">
              <svg width="8" height="6" viewBox="0 0 8 6"><path d="M.8 5L4 1.500 7.200 5" fill="none" stroke="#505050" strokeWidth="1.800" /></svg>
              <div className="mt-[515px] h-[192px] w-[14px] bg-[#cdcdcd]" />
              <svg className="mt-auto" width="8" height="6" viewBox="0 0 8 6"><path d="M.8 1L4 4.500 7.200 1" fill="none" stroke="#505050" strokeWidth="1.800" /></svg>
            </div>
          </div>
          <div className="flex h-[17px] items-center border-r border-[#d9d9d9] bg-[#f0f0f0]">
            <div className="flex h-[15px] w-[17px] items-center justify-center border border-[#98c6ee] bg-[#cce4f7]"><I s={9} vb="0 0 9 9"><path d="M1 1h7v7H1z" fill="#b7d27a" stroke="#333" strokeWidth="1.300" /><path d="M3 6l3-4" stroke="#38659c" /></I></div>
            <C c="w-[17px]"><I s={9} vb="0 0 9 9"><path d="M1 .8h5L8 3v5.200H1zM3 4.500h3M3 6.500h3" fill="#fff" stroke="#444" /></I></C>
            <C c="w-[5px]"><span className="h-[12px] w-px bg-[#888]" /></C>
            <C c="w-[22px]"><I s={10} vb="0 0 10 10"><path d="M1 4a4 4 0 0 1 7-1.500M9 6a4 4 0 0 1-7 1.500M8.500 0v3h-3M1.500 10V7h3" stroke="#2558a0" strokeWidth="1.200" /></I></C>
            <C c="w-[12px]"><I s={8} vb="0 0 8 8"><path d="M2 1v6M6 1v6" stroke="#1f57a8" strokeWidth="2" /></I></C>
            <C c="w-[22px]"><svg width="6" height="8" viewBox="0 0 6 8"><path d="M5 .8L1.500 4 5 7.200" fill="none" stroke="#505050" strokeWidth="1.800" /></svg></C>
            <div className="ml-[508px] h-[14px] w-[66px] bg-[#cdcdcd]" />
            <svg className="ml-[76px]" width="6" height="8" viewBox="0 0 6 8"><path d="M1 .8L4.500 4 1 7.200" fill="none" stroke="#505050" strokeWidth="1.800" /></svg>
          </div>
        </div>
        <div className="ml-[3px] pt-[1px]">
          <div className="flex h-[72px] w-[19px] flex-col items-center rounded-l-[4px] border border-r-0 border-[#9a9a9a] bg-[#f2f2f2] pt-[3px]">
            <G n="catalog" />
            <span className="mt-[4px] text-[12px] leading-[14px] text-[#6b6b6b] [writing-mode:vertical-rl]">Catalog</span>
          </div>
        </div>
      </div>
      <div className="flex h-[20px] items-center bg-[#f0f0f0] pl-[816px] pt-px">
        <T w={168}>-75.074  39.882 Decimal Degrees</T>
      </div>
    </div>
  );
}

/* ---------- Word ---------- */
const WA = ({ c = "w-[9px]" }) => <Arr c={c} f="#777" />;
const WSep = ({ c = "w-[5px]" }) => <C c={c}><div className="h-[21px] w-px bg-[#d0d0d0]" /></C>;
const Launch = () => (
  <I s={8} vb="0 0 8 8"><path d="M.5 6V.5H6M3 3l4 4M7 4v3H4" stroke="#777" /></I>
);
const GroupSep = () => <div className="mt-[4px] h-[84px] w-px shrink-0 bg-[#d0d0d0]" />;
function Lines({ l, c = "#666" }: { l: [number, number][]; c?: string }) {
  return (
    <svg width="15" height="13" viewBox="0 0 15 13">
      {l.map(([x, w], i) => <path key={i} d={`M${x} ${1.5 + i * 3.3}h${w}`} stroke={c} strokeWidth="1.200" />)}
    </svg>
  );
}

function Ribbon() {
  const lab = "flex h-[18px] items-center text-[#666] mt-[3px]";
  return (
    <div className="flex h-[92px] shrink-0 bg-[#f1f1f1] text-[12px] text-[#444]">
      <div className="w-[74px] pt-[3px]">
        <div className="flex h-[69px]">
          <div className="flex w-[46px] flex-col items-center pl-[5px] pt-[4px]">
            <svg width="29" height="31" viewBox="0 0 29 31">
              <path d="M1 3h23v24H1z" fill="#eec77c" />
              <path d="M6 3h4c0-3 5-3 5 0h4v4H6z" fill="#6a6a6a" />
              <path d="M15 12h8l5 5v13H15zM23 12v5h5" fill="#fff" stroke="#666" />
            </svg>
            <T w={28} c="-mt-px">Paste</T>
            <svg className="mt-[3px]" width="7" height="4" viewBox="0 0 7 4"><path d="M.5 0h6l-3 3.500z" fill="#777" /></svg>
          </div>
          <div className="flex w-[21px] flex-col items-center">
            <C c="w-[22px]"><I s={15}><path d="M4 1l5 9M11 1L7 10" stroke="#aaa" strokeWidth="1.800" /><circle cx="4.500" cy="12.500" r="2.500" stroke="#aaa" strokeWidth="1.400" /><circle cx="11.500" cy="12.500" r="2.500" stroke="#aaa" strokeWidth="1.400" /></I></C>
            <C c="w-[22px]"><I s={15}><path d="M1.500 1.500h5l3 3v7h-8zM6.500 5.500h5l3 3v6h-8zM3 6h3M3 8h3M8 10h5M8 12h5" fill="#f6f6f6" stroke="#b0a6b4" /></I></C>
            <C c="w-[22px]"><I s={16}><path d="M9 5l5-4 2 2-4 5z" fill="#666" /><path d="M1 8l7-2 4 4-4 5z" fill="#efc77b" /><path d="M8 5l5 5" stroke="#666" strokeWidth="2" /></I></C>
          </div>
        </div>
        <div className={lab + " pl-[4px]"}><T w={50}>Clipboard</T><span className="ml-[8px]"><Launch /></span></div>
      </div>
      <GroupSep />
      <div className="w-[195px] pl-[3px] pt-[3px]">
        <div className="flex h-[23px]">
          <div className="flex h-[23px] w-[144px] items-center justify-between border border-[#c6c6c6] bg-white pl-[3px] pr-[1px] text-[13px]"><T w={82}>Cambria (Body)</T><WA c="w-[12px]" /></div>
          <div className="-ml-px flex h-[23px] w-[44px] items-center justify-between border border-[#c6c6c6] bg-white pl-[3px] pr-[1px] text-[13px]"><T w={12}>12</T><WA c="w-[12px]" /></div>
        </div>
        <div className="flex h-[23px] items-center text-[12px]">
          <C c="w-[20px] font-bold">B</C><C c="w-[24px] font-['Liberation_Serif',serif] text-[14px] font-bold italic">I</C><C c="w-[20px] font-bold underline">U</C><WA c="w-[12px]" />
          <C c="w-[24px] text-[12px] line-through"><T w={16}>abc</T></C>
          <C c="w-[22px] font-bold">x<sub className="text-[8px] text-[#3c78b4]">2</sub></C>
          <C c="w-[22px] font-bold">x<sup className="text-[8px] text-[#3c78b4]">2</sup></C>
          <WSep />
          <C c="w-[28px]"><I s={16}><text x="1" y="9.500" fontSize="9" fontFamily="Noto Sans, sans-serif" fill="#555">A</text><path d="M5 11l7-7 4 3-7 8z" fill="#ee8fa3" /></I></C>
        </div>
        <div className="flex h-[23px] items-center text-[13px]">
          <C c="w-[21px]"><span className="text-[16px] font-bold leading-none text-white [-webkit-text-stroke:1px_#3c78b4]">A</span></C><WA c="w-[10px]" />
          <C c="w-[24px]"><svg width="17" height="17" viewBox="0 0 17 17"><text x="0" y="9" fontSize="10" fontFamily="Noto Sans, sans-serif" fill="#444">ab</text><path d="M16 1l-7 8-3 2 1-4z" fill="#777" /><path d="M0 12.500h16v4H0z" fill="#ffff00" /></svg></C><WA c="w-[11px]" />
          <C c="w-[24px]"><span className="flex flex-col items-center text-[13px] font-bold leading-[12px]">A<span className="h-[4px] w-[16px] bg-[#ff0000]" /></span></C><WA c="w-[11px]" />
          <C c="w-[22px]"><T w={16}>Aa</T></C><WA c="w-[10px]" /><WSep />
          <C c="w-[26px]"><span className="text-[14px]">A</span><svg className="mb-[9px]" width="5" height="3" viewBox="0 0 5 3"><path d="M0 3h5L2.500 0z" fill="#3c78b4" /></svg></C>
          <C c="w-[22px]"><span className="text-[12px]">A</span><svg className="mb-[9px]" width="5" height="3" viewBox="0 0 5 3"><path d="M0 0h5L2.500 3z" fill="#3c78b4" /></svg></C>
        </div>
        <div className={lab + " pl-[73px]"}><T w={24}>Font</T><span className="ml-[85px]"><Launch /></span></div>
      </div>
      <GroupSep />
      <div className="w-[161px] pl-[3px] pt-[3px]">
        <div className="flex h-[23px] items-center">
          {[0, 1, 2].map((k) => (
            <React.Fragment key={k}>
              <C c={k === 2 ? "w-[22px]" : "w-[20px]"}>
                <svg width="14" height="16" viewBox="0 0 14 16">
                  <path d={k === 2 ? "M4 3h10M8 8h6M11 13h3" : "M5 3h9M5 8h9M5 13h9"} stroke="#666" strokeWidth="1.200" />
                  {k === 0 && <path d="M0 2h2.500v2.500H0zM0 7h2.500v2.500H0zM0 12h2.500v2.500H0z" fill="#3c78b4" />}
                  {k === 1 && <path d="M1.500 1v4M.5 6.500h2v1.500l-2 1.500h2M.5 11.500h2v3h-2M1 13h1.500" stroke="#3c78b4" fill="none" />}
                  {k === 2 && <path d="M1.500 1v4M4 7h2v3H4zM9 10.500v4" stroke="#3c78b4" fill="none" />}
                </svg>
              </C>
              <WA c="w-[14px]" />
            </React.Fragment>
          ))}
          <WSep c="w-[5px]" />
          {["M6 7H0M3 4L0 7l3 3", "M0 7h6M3 4l3 3-3 3"].map((d) => (
            <C key={d} c="w-[23px]"><svg width="17" height="14" viewBox="0 0 17 14"><path d="M1 1h15M8 5h8M8 9h8M1 13h15" stroke="#666" strokeWidth="1.200" /><path d={d} stroke="#3c78b4" strokeWidth="1.800" fill="none" /></svg></C>
          ))}
        </div>
        <div className="flex h-[23px] items-center">
          <div className="flex h-[23px] w-[22px] items-center justify-center bg-[#c5c5c5]"><Lines l={[[0, 14], [0, 9], [0, 14], [0, 9]]} c="#444" /></div>
          <C><Lines l={[[0, 14], [2, 10], [0, 14], [2, 10]]} /></C>
          <C><Lines l={[[0, 14], [5, 9], [0, 14], [5, 9]]} /></C>
          <C><Lines l={[[0, 14], [0, 14], [0, 14], [0, 14]]} /></C>
          <WSep c="w-[8px]" />
          <C c="w-[20px]"><svg width="15" height="16" viewBox="0 0 15 16"><path d="M6 3h9M6 8h9M6 13h9" stroke="#666" strokeWidth="1.200" /><path d="M2.500 1v14M.5 3.500L2.500 1l2 2.500M.5 12.500l2 2.500 2-2.500" stroke="#3c78b4" strokeWidth="1.300" fill="none" /></svg></C><WA />
        </div>
        <div className="flex h-[23px] items-center">
          <C><I s={16}><path d="M3 6l5-4 5 5-5 4z" fill="#fff" stroke="#666" /><path d="M13 5c2 1 2 3 1 6" stroke="#3c78b4" strokeWidth="2" /><path d="M.8 12.500h14v3H.8z" fill="#fff" stroke="#888" /></I></C><WA c="w-[10px]" />
          <C c="w-[24px]"><I s={14}><path d="M1.500 1.500h13v13M1.500 1.500v13M8 2v12M2 8h12" stroke="#666" strokeDasharray="1.500 1.500" /><path d="M1 15h14" stroke="#555" strokeWidth="1.500" /></I></C><WA c="w-[11px]" />
          <WSep c="w-[10px]" />
          <C c="w-[24px]"><svg width="15" height="17" viewBox="0 0 15 17" fontFamily="Noto Sans, sans-serif" fontSize="9.500" fontWeight="700"><text x="0" y="7.500" fill="#3c78b4">A</text><text x="0" y="16.500" fill="#8b5bb0">Z</text><path d="M11 1v13M8.300 11.500l2.700 3 2.700-3" fill="none" stroke="#666" strokeWidth="1.200" /></svg></C>
          <C c="w-[35px] text-[16px] text-[#666]">¶</C>
        </div>
        <div className={lab + " pl-[42px]"}><T w={52}>Paragraph</T><span className="ml-[52px]"><Launch /></span></div>
      </div>
      <GroupSep />
      <div className="w-[245px] pl-[4px] pt-[6px]">
        <div className="flex h-[60px] w-[233px] border border-[#ababab] bg-white">
          {([["AaBbCcDd", 57, "¶ Abstract", 53, "text-[13px]"], ["AaBbCcI", 58, "¶ Author", 46, "text-[14px]"], ["AaBbCcI", 58, "¶ Bibliogr...", 58, "text-[14px]"]] as [string, number, string, number, string][]).map(([a, w, b, w2, f]) => (
            <div key={b} className="flex w-[72px] flex-col items-center pt-[8px]">
              <span className="flex h-[26px] items-center font-['Cambria','Noto_Serif','Liberation_Serif',serif] text-black"><T w={w} c={f}>{a}</T></span>
              <span className="flex h-[23px] items-center text-[#666]"><T w={w2}>{b}</T></span>
            </div>
          ))}
          <div className="ml-auto flex w-[15px] flex-col border-l border-[#ababab]">
            <div className="flex h-[20px] items-center justify-center bg-[#e4e4e4]"><svg width="6" height="3" viewBox="0 0 6 3"><path d="M0 3h6L3 0z" fill="#bbb" /></svg></div>
            <div className="flex h-[19px] items-center justify-center border-y border-[#ababab]"><svg width="6" height="3" viewBox="0 0 6 3"><path d="M0 0h6L3 3z" fill="#666" /></svg></div>
            <div className="flex h-[19px] items-center justify-center"><svg width="7" height="6" viewBox="0 0 7 6"><path d="M0 0h7v1H0zM.5 3h6l-3 3z" fill="#666" /></svg></div>
          </div>
        </div>
        <div className="mt-[9px] flex h-[18px] items-center pl-[95px] text-[#666]"><T w={29}>Styles</T><span className="ml-[105px]"><Launch /></span></div>
      </div>
      <GroupSep />
      <div className="flex w-[43px] flex-col items-center pt-[4px]">
        <div className="flex h-[30px] w-[30px] items-center justify-center border border-[#c6c6c6] bg-[#fbfbfb]"><I s={14}><circle cx="10" cy="6" r="4.500" stroke="#3c78b4" strokeWidth="1.800" /><path d="M7 9l-6 6" stroke="#3c78b4" strokeWidth="2.400" /></I></div>
        <T w={36} c="mt-[4px]">Editing</T>
        <svg className="mt-[4px]" width="7" height="4" viewBox="0 0 7 4"><path d="M.5 0h6l-3 3.500z" fill="#777" /></svg>
      </div>
      <GroupSep />
      <div className="flex flex-1 items-end justify-end pb-[5px] pr-[10px]"><svg width="9" height="6" viewBox="0 0 9 6"><path d="M.8 5L4.500 1.500 8.200 5" fill="none" stroke="#666" strokeWidth="1.800" /></svg></div>
    </div>
  );
}

function HRuler() {
  const marks = [];
  for (let k = 1; k < 52; k++) {
    const x = 24 + k * 13.25;
    if (k % 8 === 0) marks.push(<text key={k} x={x} y="9" fontSize="9.500" textAnchor="middle" fill="#444">{k / 8}</text>);
    else if (k % 4 === 0) marks.push(<path key={k} d={`M${x} 2.500v5`} stroke="#555" />);
    else marks.push(<path key={k} d={`M${x - 0.5} 5h1.200`} stroke="#555" strokeWidth="1.500" />);
  }
  return (
    <svg width="733" height="24" viewBox="0 -5 733 24" fontFamily="Noto Sans, sans-serif">
      <path d="M0 0h733v10.500H0z" fill="#fff" />
      <path d="M0 0h24v10.500H0zM713 0h20v10.500h-20z" fill="#c6c6c6" />
      <path d="M10 5h1.200M722 5h1.200" stroke="#555" strokeWidth="1.500" />
      {marks}
      <path d="M20.500-1.500h8v3l-4 4-4-4zM20.500 12v-3l4-4 4 4v3zM20.500 13h8v5h-8z" fill="#fff" stroke="#888" />
      <path d="M709 12V9l4-4 4 4v3z" fill="#fff" stroke="#888" />
    </svg>
  );
}
function VRuler() {
  const marks = [];
  for (let k = -1; k < 64; k++) {
    const y = 23 + k * 13.25;
    const m = ((k % 8) + 8) % 8;
    if (m === 0 && y < 760) marks.push(<text key={k} transform={`translate(9.500 ${y}) rotate(-90)`} fontSize="9.500" textAnchor="middle" fill="#444">{2 + k / 8}</text>);
    else if (m === 4) marks.push(<path key={k} d={`M3.500 ${y}h5`} stroke="#555" />);
    else marks.push(<path key={k} d={`M6 ${y - 0.5}v1.200`} stroke="#555" strokeWidth="1.500" />);
  }
  return (
    <svg width="12" height="872" viewBox="0 0 12 872" fontFamily="Noto Sans, sans-serif">
      <path d="M0 0h12v763H0z" fill="#fff" />
      <path d="M0 763h12v108H0z" fill="#c6c6c6" />
      {marks}
    </svg>
  );
}

const Bad = ({ children }: Kids) => <span className="underline decoration-[#ff2a2a] decoration-wavy decoration-1 underline-offset-[2px]">{children}</span>;
const To = () => <span className="font-['DejaVu_Sans',sans-serif] text-[15px] leading-none">→</span>;

function Line({ n, w, mt = "", ind = "w-[27px]", children }: { n?: string; w: number; mt?: string; ind?: string } & Kids) {
  return (
    <div className={"flex h-[21px] items-center " + mt}>
      {n !== undefined && <span className={"shrink-0 " + ind}>{n}</span>}
      <T w={w}>{children}</T>
    </div>
  );
}

function Word() {
  const tabs: [string, number][] = [["Insert", 29], ["Design", 36], ["Layout", 36], ["References", 57], ["Mailings", 45], ["Review", 37], ["View", 25], ["EndNote X7", 62]];
  const btn = "flex h-[15px] w-[15px] shrink-0 items-center justify-center border border-[#ababab] bg-white";
  return (
    <div className="absolute left-[1097px] top-0 flex h-[1155px] w-[776px] flex-col border-b border-l border-r-2 border-[#2b579a] bg-[#e6e6e6] font-['Noto_Sans','Open_Sans',sans-serif] text-[12px] shadow-[0_0_12px_rgba(0,0,0,.6)]">
      <div className="relative h-[60px] shrink-0 bg-[#2b579a] text-white">
        <svg className="absolute left-0 top-0" width="773" height="60" viewBox="0 0 773 60" fill="none" stroke="#264e8b" strokeWidth="4">
          <circle cx="298" cy="37" r="17" /><path d="M306 46l-13-13M291 46V31h14" strokeWidth="5" />
          <circle cx="346" cy="34" r="4" /><circle cx="281" cy="15" r="3" /><path d="M350 35h130M285 16h170M400 46h130M480 26h20l50 26" />
          <circle cx="552" cy="20" r="24" strokeDasharray="50 10" /><path d="M540 30l22-20M544 11h18v17" strokeWidth="7" />
          <path d="M630 56l38-28h105M712 36l34-34M730 36l34-34" />
        </svg>
        <div className="relative flex h-[36px] items-center">
          <div className="flex items-center pb-[4px] pl-[22px]">
            <I s={14}><path d="M1 1h14v14H1zM4 1.500h8v5H4zM4 15v-5h8v5" stroke="#fff" strokeWidth="1.600" /></I>
            <span className="ml-[14px] flex"><I s={15}><path d="M6 1L2 5l4 4M2 5h7c6 0 6 8 0 9" stroke="#fff" strokeWidth="2.400" /></I></span>
            <Arr c="w-[17px]" f="#fff" />
            <span className="ml-[3px] flex"><I s={15}><path d="M11 1v5h4M12 5a6 6 0 1 1-7-2" stroke="#fff" strokeWidth="2.200" /></I></span>
            <span className="ml-[18px] flex"><I s={7} vb="0 0 7 7"><path d="M1 0h5v1H1zM1 3h5L3.500 6z" fill="#fff" /></I></span>
          </div>
          <T w={423} c="ml-[21px] mt-[3px]">DRAFT_Lab_07_Raster_Operations_06_22_2018.docx - Word (Product Activation...</T>
          <div className="ml-auto flex items-center pb-[4px] pr-[18px]">
            <I s={13} vb="0 0 13 11"><path d="M.5.5h12v10H.5zM.5 2.500h12M6.500 9V4.500M4.500 6.500l2-2 2 2" stroke="#fff" /></I>
            <span className="ml-[36px] h-px w-[10px] bg-white" />
            <span className="ml-[36px] h-[10px] w-[10px] border border-white" />
            <span className="ml-[35px] flex"><I s={11} vb="0 0 11 11"><path d="M.5.5l10 10M10.500.5l-10 10" stroke="#fff" strokeWidth="1.200" /></I></span>
          </div>
        </div>
        <div className="relative flex h-[24px] items-center">
          <T w={18} c="ml-[20px] mt-px">File</T>
          <div className="ml-[25px] flex h-[24px] w-[44px] items-center justify-center bg-[#f1f1f1] text-[#2b579a]"><T w={33}>Home</T></div>
          {tabs.map(([t, w], i) => (
            <React.Fragment key={t}>
              <T w={w} c={i === 1 || i === 6 ? "ml-[6px]" : "ml-[7px]"}>{t}</T>
              <span className="ml-[5px] h-[23px] w-px shrink-0 bg-[#8199c2]" />
            </React.Fragment>
          ))}
          <span className="ml-[9px] flex"><I s={14}><path d="M5 11c0-3-2-3-2-6a5 5 0 0 1 10 0c0 3-2 3-2 6zM6 13.500h4M6.500 15.500h3" stroke="#fff" strokeWidth="1.300" /></I></span>
          <T w={47} c="ml-[5px] text-[#b9c8e2]">Tell me...</T>
          <T w={59} c="ml-[13px]">Jeremy M...</T>
          <div className="ml-[11px] flex h-[23px] w-[63px] shrink-0 items-center bg-[#19417d] pl-[7px]">
            <I s={15}><circle cx="8" cy="5" r="4" stroke="#fff" strokeWidth="1.500" /><path d="M1 15c1-4 3-6 6-6M12 9v6M9 12h6" stroke="#fff" strokeWidth="1.500" /></I>
            <T w={29} c="ml-[4px]">Share</T>
          </div>
        </div>
      </div>
      <Ribbon />
      <div className="flex h-[25px] shrink-0 border-t border-[#cfcfcf]">
        <div className="flex w-[23px] items-start justify-center bg-[#dadada] pt-[3px]"><div className="flex h-[15px] w-[15px] items-center justify-center border border-[#eee] bg-white"><svg width="6" height="6" viewBox="0 0 6 6"><path d="M1 0v5h5" fill="none" stroke="#555" strokeWidth="2" /></svg></div></div>
        <HRuler />
        <div className="ml-[1px] mt-[2px]"><div className={btn}><svg width="7" height="4" viewBox="0 0 7 4"><path d="M0 4h7L3.500 0z" fill="#666" /></svg></div></div>
      </div>
      <div className="flex h-[938px] shrink-0">
        <div className="w-[24px] pl-[5px]"><VRuler /></div>
        <div className="flex w-[732px] flex-col text-black">
          <div className="h-[870px] bg-white pl-[24px] font-['Cambria','Noto_Serif','Liberation_Serif',serif] text-[17.600px] leading-[21px]">
            <div className="ml-[9px] flex h-[253px] w-[232px] border-2 border-t-0 border-[#a3a3a3] bg-white pl-[9px] shadow-[0_2px_5px_rgba(0,0,0,.4)]"><Inset /></div>
            <Line n="6." w={661} mt="mt-[29px]">Turn on the Spatial Analyst raster processing extension by going to the Customize menu</Line>
            <Line n="" w={566}>and Extensions and checking the box for Spatial Analyst (if it is unchecked).</Line>
            <Line n="7." w={598} mt="mt-[13px]">Open <Bad>ArcToolbox</Bad> and go to Spatial Analyst <Bad>Tools<To />Extraction<To />Extract</Bad> by Mask.</Line>
            <Line n="8." w={633} mt="mt-[13px]">In the Extract by Mask tool, for Input raster choose the elevation mosaic grid and for</Line>
            <Line n="" w={630}>Input raster or feature mask data choose <Bad>Del_cnty</Bad>.  Name the output raster <Bad>del_elev</Bad>.</Line>
            <Line n="9." w={468} mt="mt-[13px]">Turn off all the layers except <Bad>del_elev</Bad> and view the new raster.</Line>
            <div className="mt-[81px] flex h-[30px] items-center font-['Calibri','Lato',sans-serif] text-[23px] font-bold text-[#4f81bd]"><T w={343}>Mask the Data to Delaware County</T></div>
            <Line w={40} mt="mt-[13px]">Mask</Line>
            <Line w={684} mt="mt-[47px]">Now, we will set up the Environment in ArcMap. This will specify a workspace folder for all</Line>
            <Line w={658} mt="-mt-px">of the data files generated when running different operations and make it easier to save</Line>
            <Line w={89}>output files.</Line>
            <Line n="1." ind="w-[36px]" w={576} mt="mt-[13px]">Open ArcMap, select the <Bad>Geoprocessing</Bad> file menu, and choose Environments.</Line>
          </div>
          <div className="h-[18px] shrink-0 border-y border-[#c6c6c6] bg-[#e6e6e6]" />
          <div className="flex h-[50px] flex-col bg-white pl-[477px] text-[#bdbdbd]">
            <T w={157} c="text-[20px] leading-[15px]">Activate Windows</T>
            <T w={236} c="mt-[4px] text-[15px] leading-[20px]">Go to Settings to activate Windows.</T>
          </div>
        </div>
        <div className="flex w-[17px] flex-col items-center bg-[#dadada] pb-[2px]">
          <div className="mt-[286px] h-[31px] w-[15px] shrink-0 border border-[#ababab] bg-white" />
          <div className={"mt-auto " + btn}><svg width="7" height="4" viewBox="0 0 7 4"><path d="M0 0h7L3.500 4z" fill="#666" /></svg></div>
        </div>
      </div>
      <div className="flex h-[17px] shrink-0 items-center pl-[2px] pr-[18px]">
        <div className={btn}><svg width="4" height="7" viewBox="0 0 4 7"><path d="M4 0v7L0 3.500z" fill="#666" /></svg></div>
        <div className="flex h-[15px] flex-1 bg-[#dadada] pl-[80px]"><div className="h-[15px] w-[558px] border border-[#ababab] bg-white" /></div>
        <div className={btn}><svg width="4" height="7" viewBox="0 0 4 7"><path d="M0 0v7l4-3.500z" fill="#666" /></svg></div>
      </div>
      <div className="flex h-[22px] shrink-0 items-center border-t border-[#c6c6c6] bg-[#f1f1f1] pl-[7px] text-[#555]">
        <T w={63}>Page 8 of 23</T>
        <T w={59} c="ml-[19px]">4156 words</T>
        <span className="ml-[20px] flex"><I s={15}><path d="M1 2c3-1 5 0 6 1v11c-1-1-3-2-6-1zM7 3c1-1 3-2 6-1M7 14c1-1 3-1 5-1M9 5l5 6M14 5l-5 6" stroke="#555" /></I></span>
        <span className="ml-[299px] flex"><I s={14}><path d="M1 2c3-1 6 0 7 1v12c-1-1-4-1-7-1zM15 2c-3-1-6 0-7 1v12c1-1 4-1 7-1zM3 5h3M3 8h3M3 11h3M10 5h3M10 8h3M10 11h3" stroke="#666" /></I></span>
        <div className="ml-[12px] flex h-[21px] w-[38px] items-center justify-center bg-[#c9c9c9]"><I s={14}><path d="M1 1.500h14v13H1zM3 4.500h10M3 7h10M3 9.500h10M3 12h10" stroke="#555" /></I></div>
        <span className="ml-[12px] flex"><I s={14}><path d="M14 7V2H1v11h6M3 4.500h9M3 7h6M3 9.500h4" stroke="#666" /><circle cx="11.500" cy="11.500" r="4" fill="#777" /></I></span>
        <span className="ml-[17px] h-[2px] w-[6px] bg-[#555]" />
        <span className="ml-[4px] flex h-[11px] w-[100px] items-center justify-center bg-[linear-gradient(#aaa,#aaa)] bg-[length:100%_1px] bg-center bg-no-repeat"><span className="ml-[3px] h-[11px] w-[4px] bg-[#555]" /></span>
        <span className="ml-[4px] flex"><I s={8} vb="0 0 8 8"><path d="M4 0v8M0 4h8" stroke="#555" strokeWidth="2" /></I></span>
        <T w={27} c="ml-[15px]">110%</T>
      </div>
    </div>
  );
}

/* ---------- Desktop and taskbar ---------- */
const Wallpaper = () => (
  <svg className="absolute left-0 top-0" width="1920" height="1200" viewBox="0 0 1920 1200">
    <path d="M0 0h1920v1200H0z" fill="#000" />
    <path d="M1000 1100h920v100H900z" fill="#3a0206" />
    <path d="M1160 1150h56l10 14h-60z" fill="#8c0a1c" />
    <path d="M1410 1140h200v20h-230z" fill="#6a0618" />
    <g transform="translate(1872 0)">
      <path d="M0 0h48v1200H0z" fill="#4b0002" />
      <path d="M0 0h48v122L0 139z" fill="#600008" />
      <path d="M0 24l30-2-19 73-11 5z" fill="#980424" />
      <path d="M0 139l48-17v75L0 236z" fill="#e8112d" />
      <path d="M0 236l48-39v22L0 240z" fill="#980c16" />
      <path d="M0 240l48-22v53L0 284z" fill="#74000d" />
      <path d="M0 300l24 97H0z" fill="#340000" />
      <path d="M0 457l48-6v59H0z" fill="#5c0008" />
      <path d="M0 510h48v58H0z" fill="#3a0000" />
      <path d="M0 568h48v38l-48-3z" fill="#980424" />
      <path d="M0 650l28 3-28 7zM0 740l10 20 8-12z" fill="#340000" />
      <path d="M10 760l16-20 22 12-28 60-20-8z" fill="#5c0008" />
      <path d="M48 705v50l-30-8z" fill="#980424" />
      <path d="M48 752v60l-28-9 22-50z" fill="#e8112d" />
      <path d="M0 800l48 12v12H0z" fill="#5a001c" />
      <path d="M0 823h48v113H0z" fill="#000" />
      <path d="M0 936h48v84l-48-15z" fill="#980424" />
      <path d="M22 972l26-17v29z" fill="#e8112d" />
      <path d="M0 966l48 18v53L0 1020z" fill="#8c0520" />
      <path d="M0 1020l48 14v54L0 1055z" fill="#470000" />
      <path d="M0 1055l48 32v113H0z" fill="#8c0520" />
    </g>
  </svg>
);

function Taskbar() {
  const cell = "flex h-[40px] shrink-0 items-center justify-center border-b-2 ";
  return (
    <div className="absolute left-0 top-[1160px] flex h-[40px] w-[1920px] items-center bg-linear-to-r from-black via-[#0a0002] to-[#150003] font-['Noto_Sans',sans-serif] text-[12px] text-white">
      <div className={cell + "w-[48px] border-transparent"}><I s={16}><path d="M0 2.300L6.800 1.300v6.200H0zM7.800 1.200L16 0v7.500H7.800zM0 8.500h6.800v6.200L0 13.700zM7.800 8.500H16V16l-8.200-1.200z" fill="#fff" /></I></div>
      <div className={cell + "w-[48px] border-transparent"}><I s={20} vb="0 0 20 16"><path d="M4.500 2.500h11v11h-11zM3 3.500H.5v9H3M17 3.500h2.500v9H17" stroke="#fff" /></I></div>
      <div className={cell + "ml-[3px] w-[48px] border-transparent"}><I s={20} vb="0 0 20 21"><path d="M0 9.500C1 3 5 0 10 0c6 0 10 4 10 9v2.500H6.500c0 6 7 6.500 12 3.500v4.500C11 23 3 20 3 12c0-3 1.500-5 4-6.500C3 6 1 8 0 9.500zM6.500 8H13c0-4-6-4-6.500 0z" fill="#0f7ad6" /></I></div>
      <div className={cell + "ml-[5px] w-[40px] border-[#76b9ed]"}><svg width="22" height="18" viewBox="0 0 22 18"><path d="M0 0h8l2 2h11v5H0z" fill="#e3b84c" /><path d="M0 4h22v14H0z" fill="#fbe08c" /><path d="M4 18v-6c0-2 1-2 2-2h10c1 0 2 0 2 2v6h-4v-4H8v4z" fill="#39a4dc" /></svg></div>
      <div className={cell + "ml-[4px] w-[48px] border-transparent"}><svg width="24" height="24" viewBox="0 0 24 24"><path d="M7 7c0-7 10-7 10 0" fill="none" stroke="#fff" strokeWidth="1.500" /><path d="M1 7h22v16H1z" fill="#fff" /><path d="M6.500 9.500h5v5h-5z" fill="#f25022" /><path d="M12.500 9.500h5v5h-5z" fill="#7fba00" /><path d="M6.500 15.500h5v5h-5z" fill="#00a4ef" /><path d="M12.500 15.500h5v5h-5z" fill="#ffb900" /></svg></div>
      <div className={cell + "ml-[6px] w-[40px] border-[#76b9ed]"}><svg width="22" height="22" viewBox="0 0 22 22"><circle cx="11" cy="11" r="11" fill="#e6b91e" /><path d="M11 11L1.500 5.500A11 11 0 0 0 10 22l5-9z" fill="#2c9c50" /><path d="M1.500 5.500A11 11 0 0 1 20.500 5.500H11A5.500 5.500 0 0 0 6 14z" fill="#df4232" /><circle cx="11" cy="11" r="5.200" fill="#fff" /><circle cx="11" cy="11" r="4" fill="#4587f1" /></svg></div>
      <div className={cell + "ml-[5px] w-[48px] border-[#76b9ed] bg-[#333]"}><svg width="22" height="22" viewBox="0 0 22 22"><path d="M12 3h10v16H12z" fill="#fff" /><path d="M14 6h6M14 9h6M14 12h6M14 15h6" stroke="#2b579a" /><path d="M0 2.500L13 0v22L0 19.500z" fill="#2b579a" /><text x="2" y="15" fontSize="10" fontWeight="700" fontFamily="Noto Sans, sans-serif" fill="#fff">W</text></svg></div>
      <div className={cell + "ml-[5px] w-[40px] border-[#76b9ed]"}><svg width="24" height="24" viewBox="0 0 24 24"><path d="M10 3l9-3 5 2v17l-8 3-6-3z" fill="#c9a51f" /><path d="M10 3l9-3 5 2-8 3z" fill="#f2df6e" /><path d="M10 3l6 2v17l-6-3z" fill="#e5c63a" /><path d="M18 8l4-1M18 14l4-1" stroke="#6d5707" fill="none" strokeWidth="1.500" /><path d="M0 17l9-4 7 3v4l-9 4-7-3z" fill="#e8cc45" stroke="#7d6509" strokeWidth=".6" /><circle cx="8" cy="14" r="5" fill="#2a84b8" /><path d="M5 12c3-3 6 0 3 2s-2 3-3 0z" fill="#6dc46a" /></svg></div>
      <div className={cell + "ml-[9px] w-[40px] border-[#76b9ed]"}><svg width="24" height="24" viewBox="0 0 24 24"><circle cx="12" cy="12" r="11" fill="#12507f" /><path d="M5 3c4-3 10-2 12 1s-6 5-8 9-8 4-7-3z" fill="#2f9e63" /><path d="M14 14c4-3 8-2 8 0s-5 8-8 6 0-4 0-6z" fill="#1f86a8" /><circle cx="10" cy="9" r="6" fill="#a9d9f0" stroke="#e6e6e6" strokeWidth="1.600" /><path d="M14.500 14l7.500 8.500" stroke="#d88a2e" strokeWidth="2.800" /></svg></div>
      <div className="ml-auto flex h-full items-center">
        <C c="w-[24px]"><I s={16}><path d="M0 1.500c3 0 6-1 8-1.500 2 .5 5 1.500 8 1.500 0 7-2 11-8 14.500C2 12.500 0 8.500 0 1.500z" fill="#e02b2b" /><path d="M5 4.500l6 6M11 4.500l-6 6" stroke="#fff" strokeWidth="1.800" /></I></C>
        <C c="w-[24px]"><I s={15}><path d="M0 2h14" stroke="#ee8d55" strokeWidth="3.500" /><path d="M14 3L8 15" stroke="#3db36c" strokeWidth="3.500" /><path d="M2 4l6 10" stroke="#4aa3df" strokeWidth="3.500" /></I></C>
        <C c="w-[25px]"><I s={16}><path d="M4.500 1h5v4h-5zM2.500 5h9v10h-9zM6 3h.5M8 3h.5M10 13l2 2 4-6" stroke="#ddd" /></I></C>
        <C c="w-[23px]"><I s={15}><circle cx="8" cy="8" r="7.500" fill="#1c6fb8" /><path d="M4 3c4-2 8 0 6 3s-4 1-4 4-5-3-2-7z" fill="#5cc46a" /></I></C>
        <C c="w-[24px]"><svg width="17" height="11" viewBox="0 0 17 11"><path d="M3 9a3 3 0 0 1 1-5c1-4 6-5 8-1 4 0 5 6 2 8H6z" fill="#8a8a8a" /><path d="M3 9c0-4 5-5 6-2" stroke="#333" fill="none" /></svg></C>
        <C c="w-[24px]"><I s={16}><path d="M0 1.500c3 0 6-1 8-1.500 2 .5 5 1.500 8 1.500 0 7-2 11-8 14.500C2 12.500 0 8.500 0 1.500z" fill="#fff" /><path d="M8 0v16M0 7.500h16" stroke="#111" /><path d="M11 7l5 9H6.500z" fill="#f6b21a" /><path d="M11.200 10v3M11.200 14v1" stroke="#000" /></I></C>
        <C c="w-[24px]"><I s={15}><path d="M1 1h12v11l-3 2H6l-5-3z" fill="#dcae50" /><path d="M4 1v11M7 1v11M10 1v9" stroke="#8f6a22" /><circle cx="11.500" cy="12" r="3.800" fill="#e7df1c" /><path d="M11.500 10v2.500M11.500 13.500v1" stroke="#333" /></I></C>
        <C c="w-[24px]"><I s={17}><path d="M4.500 4.500h11v7h-11zM7 14.500h6M10 11.500v3M.5 1.500h4v5h-4z" stroke="#eee" fill="#111" /></I></C>
        <C c="w-[24px]"><I s={16}><path d="M1 6h3l4-4v12L4 10H1zM10 5.500c1.500 1.500 1.500 3.500 0 5M12 4c2.500 2.500 2.500 5.500 0 8M14 2c3 3.500 3 8.500 0 12" stroke="#eee" /></I></C>
        <div className="flex w-[67px] flex-col items-center pr-[2px] leading-[18px]"><T w={42}>2:55 PM</T><T w={52}>6/22/2018</T></div>
        <div className="ml-[9px] w-[24px] pt-[4px]"><svg width="24" height="24" viewBox="0 0 24 24"><path d="M0 1h16v12H8l-4 4v-4H0z" fill="#fff" /><path d="M3 4.500h10M3 7h10M3 9.500h8" stroke="#222" /><circle cx="16" cy="16" r="7.500" fill="#333" stroke="#777" /><text x="13" y="20" fontSize="11" fontFamily="Noto Sans, sans-serif" fill="#fff">1</text></svg></div>
        <div className="ml-[13px] h-full w-px bg-[#555]" />
        <div className="w-[3px]" />
      </div>
    </div>
  );
}

export default function App() {
  return (
    <div className="relative h-[1200px] w-[1920px] overflow-hidden bg-black">
      <Wallpaper />
      <div className="absolute left-[1872px] top-[823px] flex h-[113px] w-[48px] flex-col overflow-hidden whitespace-nowrap text-white">
        <span className="-ml-[12px] mt-[8px] h-[44px] font-['Liberation_Serif',serif] text-[43px] leading-[50px] tracking-[-1px]">PLE</span>
        <span className="ml-[6px] font-['Noto_Sans',sans-serif] text-[15px] leading-[18px] tracking-[9px]">SITY</span>
        <span className="-ml-[1px] mt-[13px] font-['Noto_Sans',sans-serif] text-[14px] font-bold leading-[16px]">rts</span>
      </div>
      <div className="absolute left-[6px] top-0 h-[1158px] w-[1079px] border border-[#555] bg-[#c6c6c6]" />
      <ArcMap />
      <Word />
      <Taskbar />
    </div>
  );
}
